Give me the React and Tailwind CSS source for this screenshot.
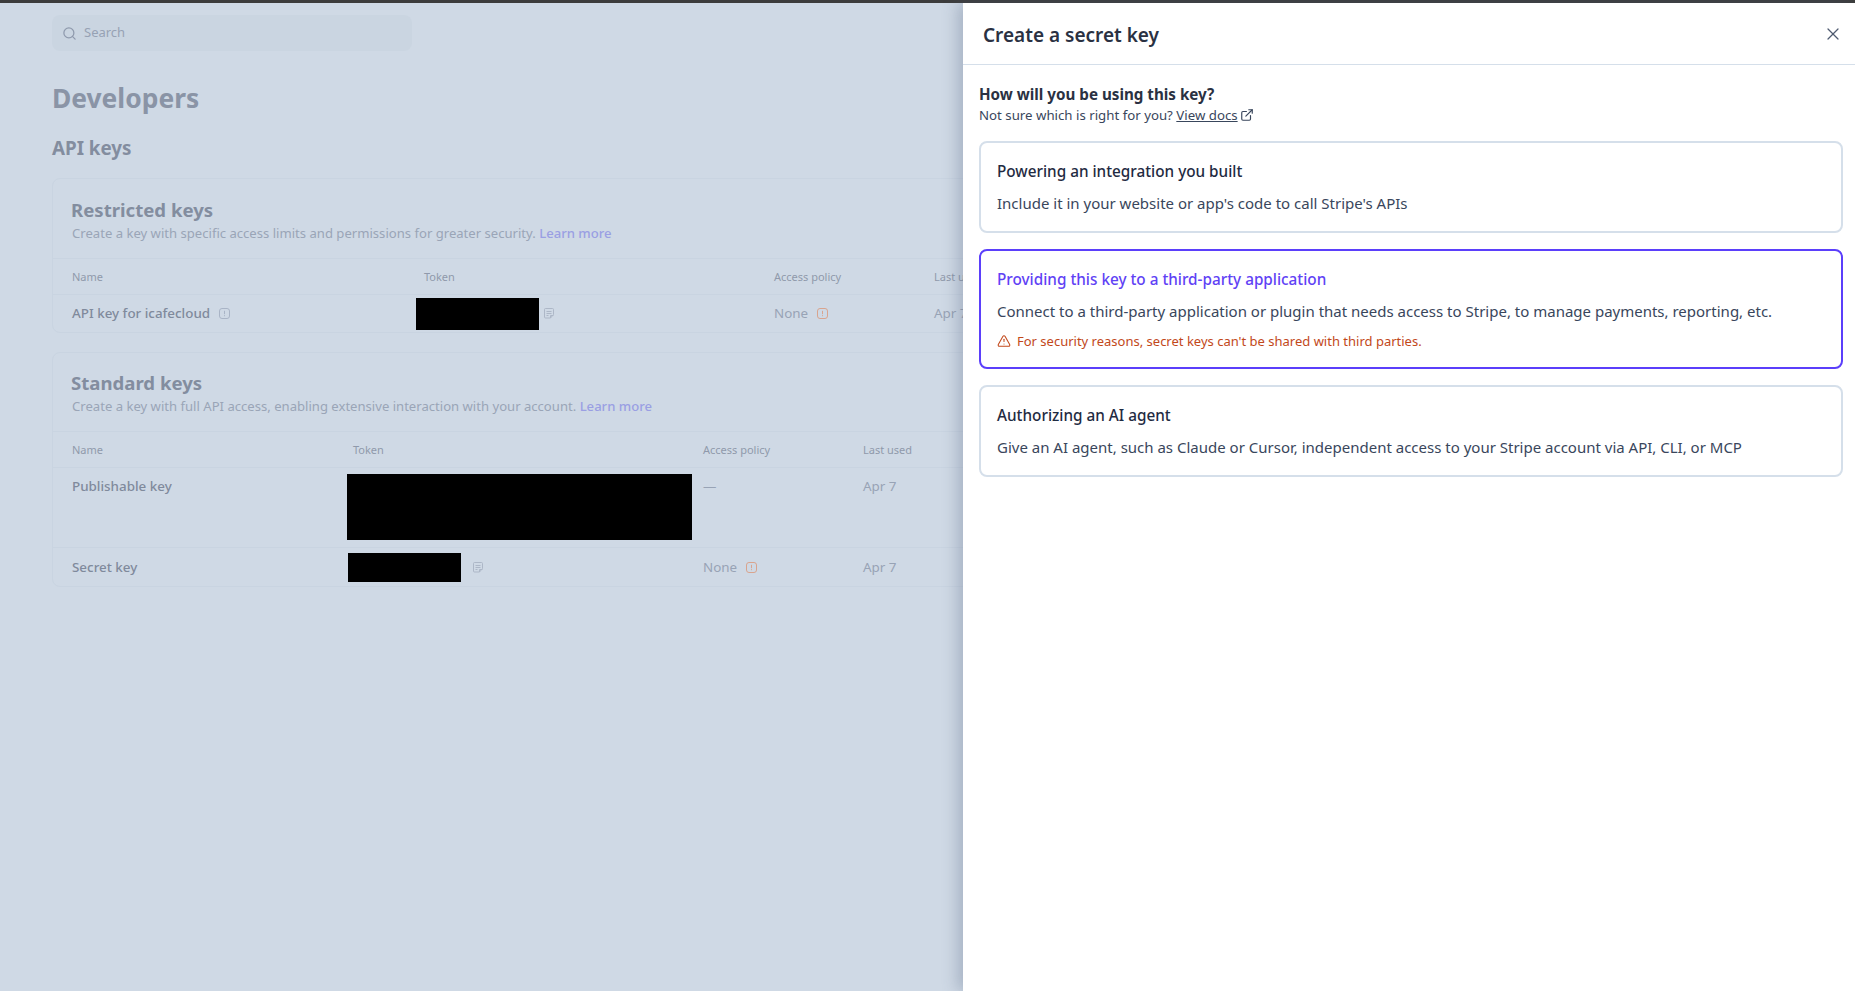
import { Search, X, ExternalLink, TriangleAlert } from "lucide-react";

function CopyIcon() {
  return (
    <svg width="12" height="13" viewBox="0 0 12 13" fill="none" stroke="#adb7c7" strokeWidth="1" className="shrink-0">
      <path d="M2.5 1.5h7a1 1 0 0 1 1 1v5l-3 3.5h-5a1 1 0 0 1-1-1v-7.5a1 1 0 0 1 1-1z" />
      <path d="M3.5 4.5h5M3.5 6.5h5M3.5 8.5h2M7.5 11V8.5h3" />
    </svg>
  );
}

function InfoIcon({ warn }) {
  return (
    <svg width="11" height="11" viewBox="0 0 11 11" fill="none" stroke={warn ? "#d9a48e" : "#a9b4c6"} strokeWidth="1" className="shrink-0">
      <rect x="0.5" y="0.5" width="10" height="10" rx="2.5" />
      <path d="M5.5 2.8v3.4M5.5 7.2v1" />
    </svg>
  );
}

function TableHead({ nameW, tokenW }) {
  return (
    <div className="flex h-[36px] items-center border-t border-[#c9d4e1] pt-[2px] text-[11px] text-[#8f99ab]">
      <div className={`${nameW} shrink-0 pl-[19px]`}>Name</div>
      <div className={`${tokenW} shrink-0`}>Token</div>
      <div className="w-[160px] shrink-0">Access policy</div>
      <div>Last used</div>
    </div>
  );
}

function Row({ tall, name, nameW, tokenW, block, access, last, copyGap, warn, info, h }) {
  const cell = tall ? "pt-[8px] leading-[20px]" : "flex items-center";
  return (
    <div className={`flex border-t border-[#c9d4e1] ${h}`}>
      <div className={`${nameW} shrink-0 pl-[19px] ${cell} text-[13.4px] font-medium text-[#808a9c]`}>
        <span>{name}</span>
        {info && <span className="ml-[9px]"><InfoIcon /></span>}
      </div>
      <div className={`${tokenW} shrink-0 flex ${tall ? "items-start pt-[6px]" : "items-center"}`}>
        <div className={`${block} bg-black`}></div>
        {copyGap && <span className={copyGap}><CopyIcon /></span>}
      </div>
      <div className={`w-[160px] shrink-0 ${cell} text-[13.4px] text-[#98a3b5]`}>
        <span>{access}</span>
        {warn && <span className="ml-[9px]"><InfoIcon warn /></span>}
      </div>
      <div className={`${cell} text-[13.4px] text-[#98a3b5]`}>{last}</div>
    </div>
  );
}

function Option({ title, desc, active, warning, h }) {
  return (
    <div className={`${h} rounded-[8px] border-2 px-[16px] pt-[18px] ${active ? "border-[#5b3ffb]" : "border-[#d5dfea]"}`}>
      <div className={`text-[15.3px] font-medium leading-[20px] ${active ? "text-[#5f42f5]" : "text-[#1f2b42]"}`}>{title}</div>
      <div className="mt-[12px] text-[15px] leading-[20px] text-[#39465c]">{desc}</div>
      {warning && (
        <div className="mt-[11px] flex items-center gap-[6px] text-[13px] leading-[18px] text-[#c2481a]">
          <TriangleAlert size={14} strokeWidth={1.8} />
          <span>{warning}</span>
        </div>
      )}
    </div>
  );
}

export default function App() {
  return (
    <div className="relative h-[991px] w-[1855px] overflow-hidden bg-[#cfd9e5] font-['Noto_Sans','Open_Sans',sans-serif]">
      <div className="h-[3px] bg-[#3c3c3c]"></div>

      {/* page behind the drawer */}
      <div className="px-[52px]">
        <div className="mt-[12px] flex h-[36px] w-[360px] items-center gap-[7px] rounded-[8px] bg-[#cad5e1] pl-[10px] text-[13px] text-[#97a2b4]">
          <Search size={15} color="#8f9aad" />
          <span>Search</span>
        </div>
        <div className="mt-[29px] text-[26.4px] font-bold leading-[36px] text-[#8a94a6]">Developers</div>
        <div className="mt-[19px] text-[18.8px] font-bold leading-[26px] text-[#838d9f]">API keys</div>

        <div className="mt-[17px] rounded-[8px] border border-[#c9d4e1]">
          <div className="h-[79px] pl-[18px] pt-[18px]">
            <div className="text-[18.6px] font-bold leading-[26px] text-[#838d9f]">Restricted keys</div>
            <div className="pl-[1px] text-[13.1px] leading-[20px] text-[#9aa5b7]">
              Create a key with specific access limits and permissions for greater security. <span className="font-medium text-[#9a9fe3]">Learn more</span>
            </div>
          </div>
          <TableHead nameW="w-[371px]" tokenW="w-[350px]" />
          <Row name="API key for icafecloud" info nameW="w-[363px]" tokenW="w-[358px]" block="h-[32px] w-[123px]" access="None" warn last="Apr 7" copyGap="ml-[4px]" h="h-[38px]" />
        </div>

        <div className="mt-[19px] rounded-[8px] border border-[#c9d4e1]">
          <div className="h-[78px] pl-[18px] pt-[17px]">
            <div className="text-[18.6px] font-bold leading-[26px] text-[#838d9f]">Standard keys</div>
            <div className="pl-[1px] text-[13.1px] leading-[20px] text-[#9aa5b7]">
              Create a key with full API access, enabling extensive interaction with your account. <span className="font-medium text-[#9a9fe3]">Learn more</span>
            </div>
          </div>
          <TableHead nameW="w-[300px]" tokenW="w-[350px]" />
          <Row tall name="Publishable key" nameW="w-[294px]" tokenW="w-[356px]" block="h-[66px] w-[345px]" access="—" last="Apr 7" h="h-[80px]" />
          <Row name="Secret key" nameW="w-[295px]" tokenW="w-[355px]" block="h-[29px] w-[113px]" access="None" warn last="Apr 7" copyGap="ml-[11px]" h="h-[39px]" />
        </div>
      </div>

      {/* drawer */}
      <div className="absolute bottom-0 right-0 top-[3px] w-[892px] bg-white shadow-[-6px_0_14px_rgba(80,95,125,0.3)]">
        <div className="flex h-[62px] items-center justify-between border-b border-[#d5dfea] pl-[20px] pr-[12px]">
          <div className="pt-[4px] text-[19px] font-semibold text-[#2a3142]">Create a secret key</div>
          <X size={20} color="#4f5b70" strokeWidth={1.5} />
        </div>
        <div className="pl-[16px] pr-[12px] pt-[19px]">
          <div className="text-[15.2px] font-bold leading-[20px] text-[#2a3142]">How will you be using this key?</div>
          <div className="mt-[2px] flex items-center text-[13.25px] leading-[18px] text-[#39465c]">
            Not sure which is right for you?&nbsp;
            <span className="underline decoration-[#39465c]">View docs</span>
            <ExternalLink size={14} className="ml-[2px]" />
          </div>
          <div className="mt-[17px] flex flex-col gap-[16px]">
            <Option h="h-[92px]" title="Powering an integration you built" desc="Include it in your website or app's code to call Stripe's APIs" />
            <Option h="h-[120px]" active title="Providing this key to a third-party application" desc="Connect to a third-party application or plugin that needs access to Stripe, to manage payments, reporting, etc." warning="For security reasons, secret keys can't be shared with third parties." />
            <Option h="h-[92px]" title="Authorizing an AI agent" desc="Give an AI agent, such as Claude or Cursor, independent access to your Stripe account via API, CLI, or MCP" />
          </div>
        </div>
      </div>
    </div>
  );
}
